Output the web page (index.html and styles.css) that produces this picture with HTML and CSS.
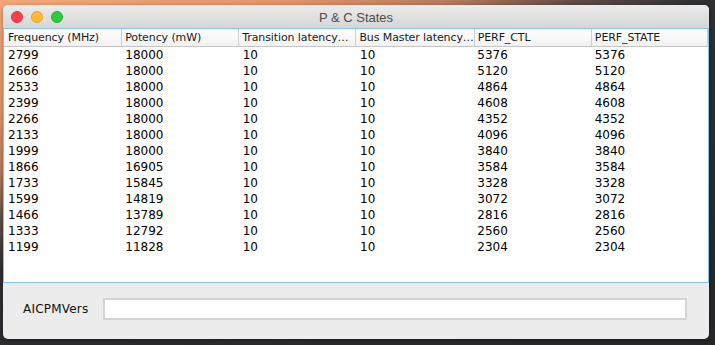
FILE: index.html
```html
<!DOCTYPE html>
<html>
<head>
<meta charset="utf-8">
<link rel="stylesheet" href="styles.css">
</head>
<body>
<div class="window">
  <div class="titlebar">
    <div class="lights">
      <span class="light red"></span>
      <span class="light yellow"></span>
      <span class="light green"></span>
    </div>
    <div class="title">P &amp; C States</div>
  </div>
  <div class="tablepane">
    <div class="row header">
      <div class="hcell">Frequency (MHz)</div>
      <div class="hcell">Potency (mW)</div>
      <div class="hcell">Transition latency…</div>
      <div class="hcell">Bus Master latency…</div>
      <div class="hcell">PERF_CTL</div>
      <div class="hcell">PERF_STATE</div>
    </div>
    <div class="row"><div>2799</div><div>18000</div><div>10</div><div>10</div><div>5376</div><div>5376</div></div>
    <div class="row"><div>2666</div><div>18000</div><div>10</div><div>10</div><div>5120</div><div>5120</div></div>
    <div class="row"><div>2533</div><div>18000</div><div>10</div><div>10</div><div>4864</div><div>4864</div></div>
    <div class="row"><div>2399</div><div>18000</div><div>10</div><div>10</div><div>4608</div><div>4608</div></div>
    <div class="row"><div>2266</div><div>18000</div><div>10</div><div>10</div><div>4352</div><div>4352</div></div>
    <div class="row"><div>2133</div><div>18000</div><div>10</div><div>10</div><div>4096</div><div>4096</div></div>
    <div class="row"><div>1999</div><div>18000</div><div>10</div><div>10</div><div>3840</div><div>3840</div></div>
    <div class="row"><div>1866</div><div>16905</div><div>10</div><div>10</div><div>3584</div><div>3584</div></div>
    <div class="row"><div>1733</div><div>15845</div><div>10</div><div>10</div><div>3328</div><div>3328</div></div>
    <div class="row"><div>1599</div><div>14819</div><div>10</div><div>10</div><div>3072</div><div>3072</div></div>
    <div class="row"><div>1466</div><div>13789</div><div>10</div><div>10</div><div>2816</div><div>2816</div></div>
    <div class="row"><div>1333</div><div>12792</div><div>10</div><div>10</div><div>2560</div><div>2560</div></div>
    <div class="row"><div>1199</div><div>11828</div><div>10</div><div>10</div><div>2304</div><div>2304</div></div>
  </div>
  <div class="bottom">
    <span class="label">AICPMVers</span>
    <div class="field"></div>
  </div>
</div>
</body>
</html>
```
FILE: styles.css
```css
html, body {
  margin: 0;
  padding: 0;
  width: 715px;
  height: 345px;
  overflow: hidden;
}
body {
  background:
    linear-gradient(159deg, #f4a67a 0%, #e49468 18%, #b87a5e 28%, #5e4a46 36%, #2e2e33 44%, #262629 100%);
  font-family: "DejaVu Sans", "Liberation Sans", sans-serif;
  padding: 5px 0 0 3px;
  box-sizing: border-box;
}
.window {
  width: 706px;
  height: 334px;
  border-radius: 5px;
  background: #ececec;
  display: flex;
  flex-direction: column;
  overflow: hidden;
  box-shadow: 0 1px 4px rgba(0,0,0,0.35);
}
.titlebar {
  height: 23px;
  flex: none;
  position: relative;
  background: linear-gradient(#ebebeb, #d6d6d6);
  display: flex;
  align-items: center;
  justify-content: center;
}
.lights {
  position: absolute;
  left: 8px;
  top: 6px;
  display: flex;
  gap: 8px;
}
.light {
  width: 12px;
  height: 12px;
  border-radius: 50%;
  box-sizing: border-box;
}
.red { background: #fc3d4b; border: 1px solid #e2303e; }
.yellow { background: #fdbb2d; border: 1px solid #e0a428; }
.green { background: #2ecb40; border: 1px solid #22b232; }
.title {
  font-family: "Liberation Sans", "Helvetica", sans-serif;
  font-size: 13px;
  color: #4c4c4c;
  padding-top: 1px;
}
.tablepane {
  height: 253px;
  flex: none;
  background: #fff;
  border: 1px solid #86c2ef;
}
.row {
  display: grid;
  grid-template-columns: repeat(6, 1fr);
  height: 16px;
  font-size: 12px;
  line-height: 16px;
  color: #000;
}
.row > div {
  padding-left: 4px;
  white-space: nowrap;
  overflow: hidden;
}
.row.header {
  height: 17px;
  line-height: 17px;
  font-size: 11px;
  letter-spacing: -0.1px;
  background: linear-gradient(#ffffff, #f1f1f1);
  border-bottom: 1px solid #c5c5c5;
}
.row.header .hcell {
  border-left: 1px solid #cfcfcf;
  padding-left: 3px;
  color: #1a1a1a;
  overflow: visible;
}
.row.header .hcell:first-child {
  border-left: none;
  padding-left: 4px;
}
.row.header .hcell:last-child {
  border-right: 1px solid #cfcfcf;
}
.bottom {
  flex: 1;
  display: flex;
  align-items: center;
  padding: 0 22px 4px 20px;
}
.label {
  font-size: 12px;
  letter-spacing: 0.2px;
  color: #111;
  width: 80px;
}
.field {
  flex: 1;
  height: 18px;
  background: #fff;
  border: 2px solid #d4d4d4;
}
```
